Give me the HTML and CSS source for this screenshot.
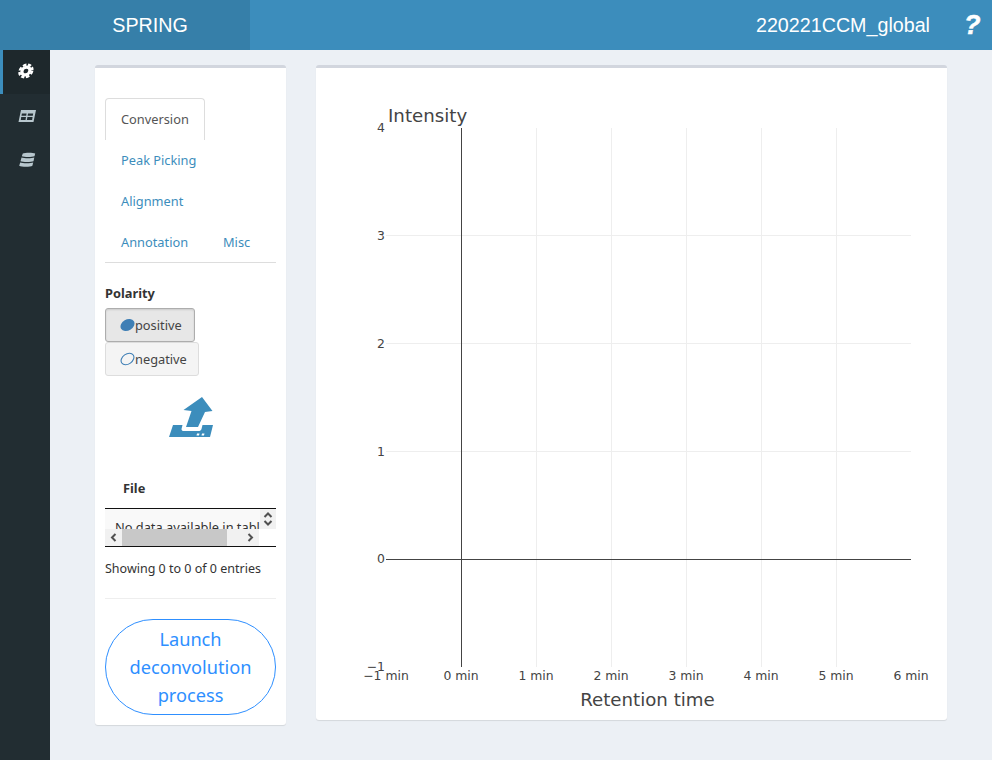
FILE: index.html
```html
<!DOCTYPE html>
<html lang="en">
<head>
<title>SPRING</title>
<link rel="stylesheet" href="styles.css">
</head>
<body>
<header class="topbar">
  <div class="logo">SPRING</div>
  <div class="project">220221CCM_global</div>
  <div class="help">?</div>
</header>
<div class="wrapper">
  <nav class="sidebar">
    <a class="side-item active" href="#">
      <svg width="16" height="16" viewBox="0 0 16 16"><g transform="translate(1.600 0) skewX(-12)"><circle cx="8" cy="8" r="3.900" fill="none" stroke="#fff" stroke-width="3.200"/><circle cx="8" cy="8" r="6.300" fill="none" stroke="#fff" stroke-width="2.400" stroke-dasharray="3.300 1.650"/></g></svg>
    </a>
    <a class="side-item" href="#">
      <svg width="18" height="14" viewBox="0 0 18 14"><path fill="#b8c7ce" fill-rule="evenodd" d="M3 1H18L15.500 13H.5ZM3.900 4.500 3.500 6.700H8.200L8.600 4.500ZM10 4.500 9.600 6.700H14.800L15.200 4.500ZM3.200 8.100 2.800 11H7.500L8 8.100ZM9.400 8.100 8.900 11H14.100L14.600 8.100Z"/></svg>
    </a>
    <a class="side-item" href="#">
      <svg width="18" height="16" viewBox="0 0 18 16"><g fill="#b8c7ce"><path d="M4.800 1.500C7 .5 15 .5 17.200 1.500L16.500 4.300C14 5.300 6 5.300 3.800 4.300Z"/><path d="M3.500 5.600C6 6.600 14 6.600 16.300 5.600L15.500 9.200C13.500 10.200 4.500 10.200 2.500 9.200Z"/><path d="M2.200 10.500C4.300 11.500 13 11.500 15.200 10.500L14.400 13.700C12.500 15 3.500 15 1.200 13.700Z"/></g></svg>
    </a>
  </nav>
  <main class="content">
    <section class="box box-left">
      <ul class="tabs">
        <li class="tab active"><a href="#">Conversion</a></li>
        <li class="tab"><a href="#">Peak Picking</a></li>
        <li class="tab"><a href="#">Alignment</a></li>
        <li class="tab"><a href="#">Annotation</a></li>
        <li class="tab"><a href="#">Misc</a></li>
      </ul>
      <div class="field-label">Polarity</div>
      <div class="radio-group">
        <button class="radio-btn checked" type="button">
          <svg width="15" height="14" viewBox="0 0 15 14"><ellipse cx="7.500" cy="7" rx="7.400" ry="5.600" transform="rotate(-30 7.500 7)" fill="#3f7fb5"/></svg>positive
        </button>
        <button class="radio-btn" type="button">
          <svg width="15" height="14" viewBox="0 0 15 14"><ellipse cx="7.500" cy="7" rx="7" ry="5" transform="rotate(-35 7.500 7)" fill="none" stroke="#3f7fb5" stroke-width="1.100"/></svg>negative
        </button>
      </div>
      <div class="upload">
        <svg width="44" height="41" viewBox="0 0 44 41"><path fill="#3c8dbc" fill-rule="evenodd" d="M33 0 43.500 14 36 15 29 30H17L22.500 14 14.500 13ZM4 28H13.500L12.500 32C12.500 33.500 13.500 34 14.500 34H29.500C31 34 32 33.500 32.500 32L33.500 28H44L41 40H0ZM28 36.500 27.500 38.500H30L30.500 36.500ZM33 36.500 32.500 38.500H35L35.500 36.500Z"/></svg>
      </div>
      <div class="table-head">File</div>
      <div class="table-frame">
        <div class="table-top">
          <div class="table-cell"><span>No data available in table</span></div>
          <div class="vbar">
            <svg width="10" height="8" viewBox="0 0 10 8"><path d="M1.500 6 5 2.500 8.500 6" fill="none" stroke="#505050" stroke-width="2"/></svg>
            <svg width="10" height="8" viewBox="0 0 10 8"><path d="M1.500 2 5 5.500 8.500 2" fill="none" stroke="#505050" stroke-width="2"/></svg>
          </div>
        </div>
        <div class="hbar">
          <svg class="arrow" width="17" height="17" viewBox="0 0 17 17"><path d="M10.500 5 7 8.500 10.500 12" fill="none" stroke="#505050" stroke-width="2"/></svg>
          <div class="thumb"></div>
          <svg class="arrow" width="17" height="17" viewBox="0 0 17 17"><path d="M6.500 5 10 8.500 6.500 12" fill="none" stroke="#505050" stroke-width="2"/></svg>
        </div>
      </div>
      <div class="table-info">Showing 0 to 0 of 0 entries</div>
      <hr class="rule">
      <button class="launch" type="button">Launch deconvolution process</button>
    </section>
    <section class="box box-right">
      <svg class="plot" width="631" height="652" viewBox="316 68 631 652">
        <g class="grid">
          <path d="M536.500 128V667M611.500 128V667M686.500 128V667M761.500 128V667M836.500 128V667"/>
          <path d="M386 235.500H911M386 343.500H911M386 451.500H911"/>
        </g>
        <g class="zero">
          <path d="M461.500 128V667"/>
          <path d="M386 559.500H911"/>
        </g>
        <g class="ticks ytick">
          <text x="385" y="132">4</text>
          <text x="385" y="240">3</text>
          <text x="385" y="348">2</text>
          <text x="385" y="456">1</text>
          <text x="385" y="563">0</text>
          <text x="385" y="671">−1</text>
        </g>
        <g class="ticks xtick">
          <text x="386" y="680">−1 min</text>
          <text x="461" y="680">0 min</text>
          <text x="536" y="680">1 min</text>
          <text x="611" y="680">2 min</text>
          <text x="686" y="680">3 min</text>
          <text x="761" y="680">4 min</text>
          <text x="836" y="680">5 min</text>
          <text x="911" y="680">6 min</text>
        </g>
        <text class="axis-title" x="388" y="122">Intensity</text>
        <text class="axis-title middle" x="647.500" y="706">Retention time</text>
      </svg>
    </section>
  </main>
</div>
</body>
</html>
```

FILE: styles.css
```css
* {
  box-sizing: border-box;
}
html, body {
  height: 100%;
}
body {
  margin: 0;
  display: flex;
  flex-direction: column;
  background-color: #ecf0f5;
  font-family: "Noto Sans", "Open Sans", sans-serif;
  font-size: 12.8px;
  color: #333;
  overflow: hidden;
}
a {
  text-decoration: none;
}

.topbar {
  display: flex;
  align-items: center;
  height: 50px;
  flex-shrink: 0;
  background-color: #3c8dbc;
  color: #fff;
  font-family: "Liberation Sans", Arial, sans-serif;
  font-size: 19.7px;
}
.logo {
  width: 250px;
  height: 50px;
  padding-left: 50px;
  line-height: 50px;
  text-align: center;
  background-color: #367fa9;
}
.project {
  margin-left: auto;
  margin-right: 34px;
}
.help {
  width: 28px;
  font-size: 27px;
  font-weight: bold;
  font-style: italic;
  -webkit-text-stroke: 0.5px #fff;
}

.wrapper {
  display: flex;
  flex: 1;
}
.sidebar {
  width: 50px;
  flex-shrink: 0;
  background-color: #222d32;
}
.side-item {
  display: flex;
  align-items: center;
  justify-content: center;
  height: 44px;
  padding-left: 4px;
}
.side-item.active {
  background-color: #1e282c;
  border-left: 3px solid #3c8dbc;
  padding: 0 2px 2px 0;
}

.content {
  flex: 1;
  display: flex;
  align-items: flex-start;
  gap: 30px;
  padding: 15px 45px 0;
}
.box {
  background-color: #fff;
  border-top: 3px solid #d2d6de;
  border-radius: 3px;
  box-shadow: 0 1px 1px rgba(0, 0, 0, 0.1);
}
.box-left {
  width: 191px;
  height: 660px;
  padding: 30px 10px 0;
  flex-shrink: 0;
}
.box-right {
  width: 631px;
  height: 655px;
}
.plot {
  display: block;
}

.tabs {
  display: flex;
  flex-wrap: wrap;
  list-style-type: none;
  margin: 0;
  padding: 0;
  border-bottom: 1px solid #ddd;
}
.tab {
  height: 41px;
  width: 100%;
}
.tab a {
  display: block;
  height: 41px;
  padding: 12px 16px 0;
  line-height: 16px;
  color: #3c8dbc;
  white-space: nowrap;
}
.tab:nth-child(4) {
  width: 102px;
  height: 40px;
}
.tab:nth-child(5) {
  width: 60px;
  height: 40px;
}
.tab.active {
  height: 42px;
}
.tab.active a {
  display: inline-block;
  width: 100px;
  height: 42px;
  color: #555;
  border: 1px solid #ddd;
  border-bottom: 0;
  border-radius: 4px 4px 0 0;
  padding-left: 15px;
  padding-top: 12px;
}

.field-label {
  margin-top: 21px;
  height: 18px;
  line-height: 18px;
  font-weight: bold;
}
.radio-group {
  display: flex;
  flex-direction: column;
  align-items: flex-start;
  margin-top: 6px;
}
.radio-btn {
  display: flex;
  align-items: center;
  height: 34px;
  padding: 0 11px 0 14px;
  background-color: #f4f4f4;
  border: 1px solid #ddd;
  border-radius: 3px;
  font: inherit;
  color: #444;
}
.radio-btn.checked {
  padding-right: 12px;
  background-color: #e7e7e7;
  border-color: #adadad;
  box-shadow: inset 0 1px 2px rgba(0, 0, 0, 0.125);
}
.upload {
  display: flex;
  justify-content: center;
  margin-top: 21px;
  height: 41px;
}

.table-head {
  margin-top: 41px;
  height: 29px;
  padding: 0 0 0 18px;
  font-weight: bold;
  line-height: 18px;
}
.table-frame {
  border-top: 1px solid #111;
  border-bottom: 1px solid #111;
  height: 39px;
}
.table-top {
  display: flex;
  height: 20px;
}
.table-cell {
  flex: 1;
  min-width: 0;
  overflow: hidden;
  padding: 9px 0 0 10px;
  background-color: #f9f9f9;
  white-space: nowrap;
  line-height: 18px;
}
.vbar {
  width: 16px;
  display: flex;
  flex-direction: column;
  align-items: center;
  padding-top: 2px;
  background-color: #f1f1f1;
}
.hbar {
  display: flex;
  align-items: center;
  width: 154px;
  height: 17px;
  background-color: #f1f1f1;
}
.arrow {
  flex-shrink: 0;
}
.thumb {
  width: 105px;
  height: 17px;
  background-color: #c8c8c8;
}
.hbar .arrow:last-child {
  margin-left: auto;
}
.table-info {
  margin-top: 13px;
  font-size: 12.5px;
  line-height: 18px;
}
.rule {
  margin: 20px 0 20px;
  border: 0;
  border-top: 1px solid #eee;
}
.launch {
  display: block;
  width: 171px;
  height: 96px;
  padding: 0 10px;
  background-color: #fff;
  border: 1px solid #2e8fff;
  border-radius: 48px;
  color: #2e8fff;
  font: inherit;
  font-size: 18.2px;
  line-height: 28px;
}

.grid path {
  fill: none;
  stroke: #eee;
  stroke-width: 1;
}
.zero path {
  fill: none;
  stroke: #444;
  stroke-width: 1;
}
.ticks text, .axis-title {
  font-family: "DejaVu Sans", sans-serif;
  fill: #444;
}
.ticks text {
  font-size: 12.4px;
}
.ytick text {
  text-anchor: end;
}
.xtick text {
  text-anchor: middle;
}
.axis-title {
  font-size: 18.2px;
}
.axis-title.middle {
  text-anchor: middle;
}
```
